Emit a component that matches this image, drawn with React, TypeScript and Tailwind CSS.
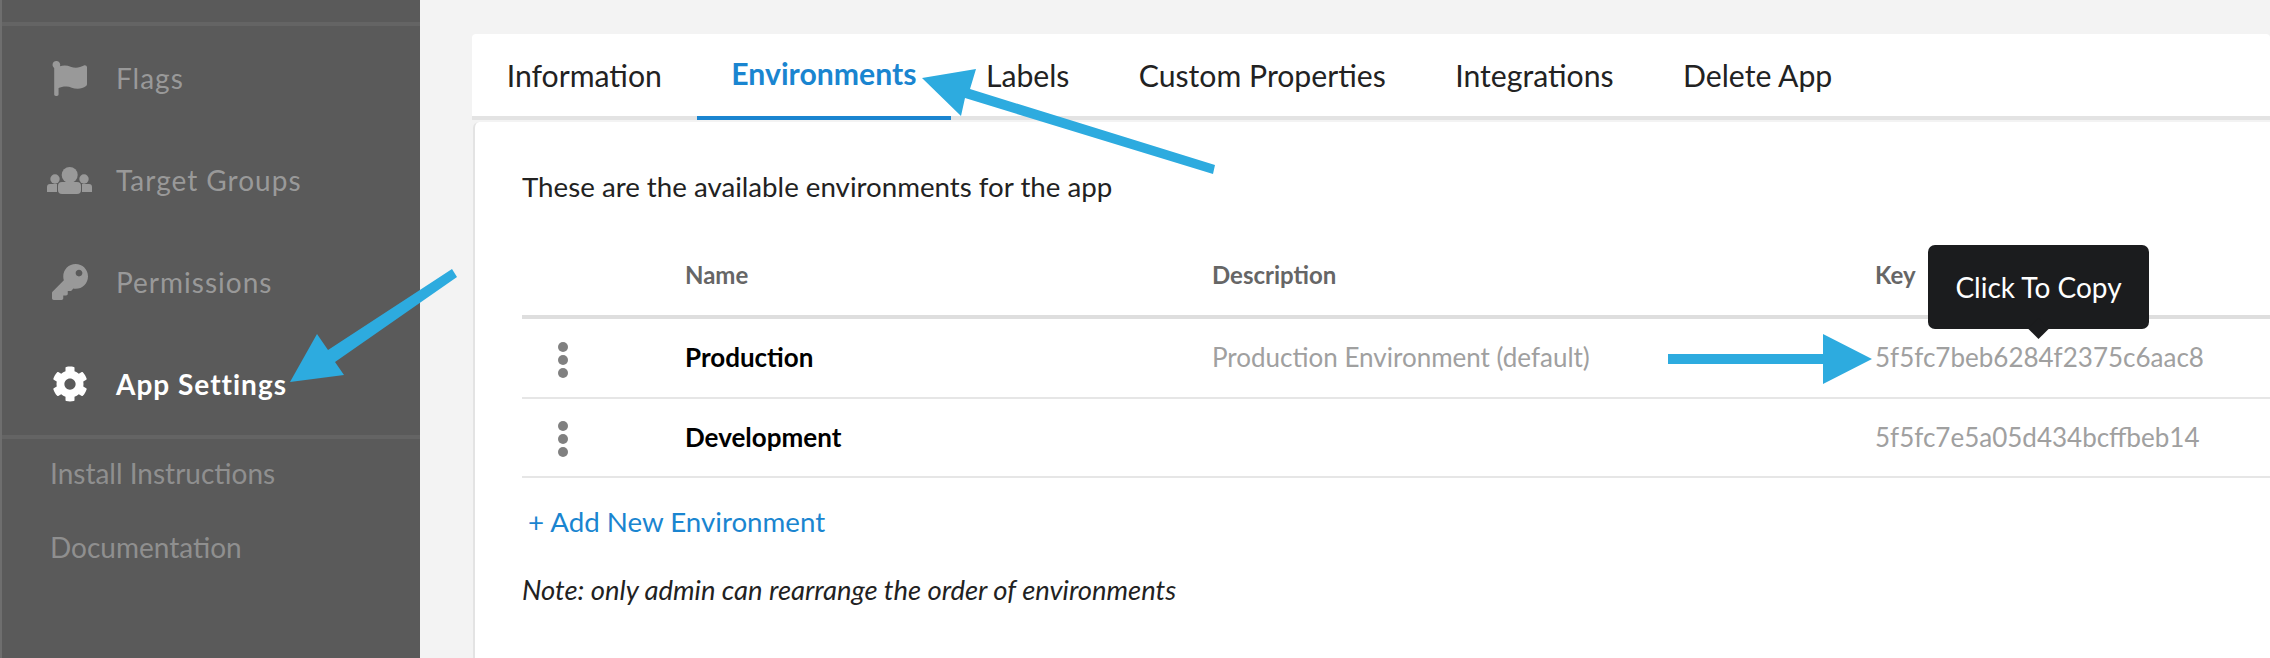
import type { SVGProps } from 'react'
import { FaCog, FaFlag, FaKey } from 'react-icons/fa'

// drawn by hand: the packaged "users" glyphs have a different silhouette
function GroupIcon(props: SVGProps<SVGSVGElement>) {
  return (
    <svg viewBox="0 0 45 27" width="45" height="27" fill="currentColor" {...props}>
      <circle cx="22.7" cy="8" r="8" />
      <rect x="11" y="15" width="23" height="12" rx="4" />
      <circle cx="8" cy="12" r="4.7" />
      <circle cx="37" cy="12" r="4.7" />
      <path d="M10 17H3a3 3 0 0 0-3 3v5h10zM35 17h7a3 3 0 0 1 3 3v5H35z" />
    </svg>
  )
}

const NAV = [
  { label: 'Flags', icon: FaFlag, size: 'text-[35px]', active: false },
  { label: 'Target Groups', icon: GroupIcon, size: '', active: false },
  { label: 'Permissions', icon: FaKey, size: 'text-[36px]', active: false },
  { label: 'App Settings', icon: FaCog, size: 'text-[36px]', active: true },
]

const TABS = ['Information', 'Environments', 'Labels', 'Custom Properties', 'Integrations', 'Delete App']

const ENVIRONMENTS = [
  { name: 'Production', description: 'Production Environment (default)', key: '5f5fc7beb6284f2375c6aac8' },
  { name: 'Development', description: '', key: '5f5fc7e5a05d434bcffbeb14' },
]

function Dots() {
  return (
    <div className="flex w-[163px] flex-col gap-[3px] pt-[4px] pl-[36px]">
      <span className="h-[10px] w-[10px] rounded-full bg-[#808080]" />
      <span className="h-[10px] w-[10px] rounded-full bg-[#808080]" />
      <span className="h-[10px] w-[10px] rounded-full bg-[#808080]" />
    </div>
  )
}

function Sidebar() {
  return (
    <aside className="flex w-[420px] shrink-0 flex-col border-l-2 border-[#6e6e6e] bg-[#5a5a5a] pt-[22px]">
      <div className="h-[4px] bg-[#646464]" />
      <nav className="flex flex-col pt-[1px]">
        {NAV.map((item) => (
          <div
            key={item.label}
            className={`flex h-[102px] items-center text-[28px] tracking-[1px] ${item.active ? 'font-bold text-white' : 'text-[#999999]'}`}
          >
            <span className="flex w-[114px] justify-center pl-[21px]">
              <item.icon className={item.size} />
            </span>
            {item.label}
          </div>
        ))}
      </nav>
      <div className="h-[4px] bg-[#646464]" />
      <div className="flex flex-col gap-[37px] pt-[16px] pl-[48px] text-[28px] leading-[37px] text-[#8f8f8f]">
        <span>Install Instructions</span>
        <span>Documentation</span>
      </div>
    </aside>
  )
}

function Tabs() {
  return (
    <div className="flex h-[86px] items-start rounded-t-[4px] border-b-[4px] border-[#e3e3e3] bg-white">
      {TABS.map((tab) => {
        const active = tab === 'Environments'
        return (
          <div
            key={tab}
            className={`-mb-[4px] flex h-[86px] items-center px-[34.7px] pb-[3px] text-[30.2px] ${active ? 'border-b-[4px] border-[#1a85d0] font-bold text-[#1a85d0]' : 'text-[#222222]'}`}
          >
            {tab}
          </div>
        )
      })}
    </div>
  )
}

function EnvironmentsTable() {
  return (
    <div>
      <div className="flex h-[93px] items-center border-b-[4px] border-[#dedede] pt-[8px] text-[24px] font-bold text-[#666666]">
        <span className="w-[163px]" />
        <span className="w-[527px]">Name</span>
        <span className="w-[663px]">Description</span>
        <span>Key</span>
      </div>
      {ENVIRONMENTS.map((env) => (
        <div key={env.name} className="flex h-[79.5px] items-center border-b-[2px] border-[#e6e6e6]">
          <Dots />
          <span className="w-[527px] text-[26px] font-bold text-black">{env.name}</span>
          <span className="w-[663px] text-[26px] text-[#a0a0a0]">{env.description}</span>
          <span className="text-[26px] text-[#a0a0a0]">{env.key}</span>
        </div>
      ))}
    </div>
  )
}

function Arrows() {
  return (
    <svg className="pointer-events-none absolute top-0 left-0" width="2270" height="658" fill="#2dabdf">
      <polygon points="922,78 976,69 970,89 1215,165 1213,174 965,98 961,116" />
      <polygon points="290,382 317,334 328,350 452,269 457,277 335,362 344,375" />
      <polygon points="1668,354 1823,354 1823,334 1872,359 1823,384 1823,364 1668,364" />
    </svg>
  )
}

export default function App() {
  return (
    <div className="relative flex h-[658px] w-[2270px] overflow-hidden bg-[#f3f3f3] font-['Lato','Inter',sans-serif]">
      <Sidebar />
      <main className="flex-1 pt-[34px] pl-[52px]">
        <Tabs />
        <div className="mt-[2px] ml-[1px] h-[560px] rounded-tl-[6px] border-l-[2px] border-[#e3e3e3] bg-white pt-[47px] pl-[47px]">
          <p className="text-[27.7px] leading-[36px] text-[#222222]">These are the available environments for the app</p>
          <div className="mt-[21px]">
            <EnvironmentsTable />
          </div>
          <div className="mt-[26px] pl-[6px] text-[27.7px] leading-[36px] text-[#1a85d0]">+ Add New Environment</div>
          <p className="mt-[34px] text-[27.4px] leading-[32px] text-[#222222] italic">
            Note: only admin can rearrange the order of environments
          </p>
        </div>
      </main>
      <div className="absolute top-[245px] left-[1928px] flex h-[84px] w-[221px] items-center justify-center rounded-[7px] bg-[#1b1c1e] text-[28px] text-white">
        Click To Copy
        <span className="absolute top-[76px] left-[103px] h-[15px] w-[15px] rotate-45 bg-[#1b1c1e]" />
      </div>
      <Arrows />
    </div>
  )
}
